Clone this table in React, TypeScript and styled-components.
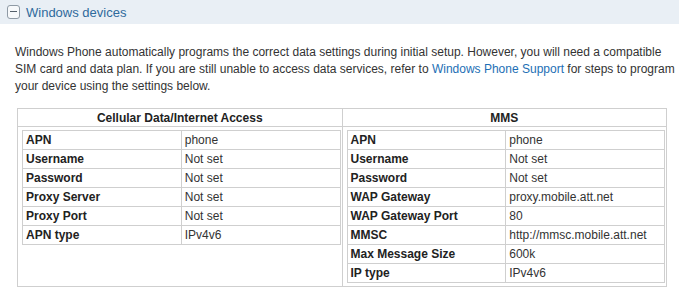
import React from 'react';
import styled, { createGlobalStyle } from 'styled-components';

const GlobalStyle = createGlobalStyle`
  body {
    margin: 0;
    background: #ffffff;
    font-family: "Liberation Sans", Arial, sans-serif;
    color: #333333;
  }
`;

const SectionHeader = styled.div`
  display: flex;
  align-items: center;
  gap: 6px;
  height: 24px;
  padding-left: 7px;
  background: #e9eff5;
`;

const ToggleIcon = styled.span`
  position: relative;
  box-sizing: border-box;
  width: 13px;
  height: 14px;
  border: 1px solid #8f9aa5;
  border-radius: 3px;
  background: #f7f9fb;

  &::after {
    content: '';
    position: absolute;
    left: 2px;
    right: 2px;
    top: 5px;
    height: 1px;
    background: #55606b;
  }
`;

const Title = styled.span`
  font-size: 13px;
  color: #2f6a9c;
`;

const Body = styled.div`
  padding: 20px 0 0 15px;
`;

const Intro = styled.p`
  margin: 0;
  width: 664px;
  font-size: 12px;
  line-height: 17px;
  color: #333333;
`;

const Link = styled.a`
  color: #1d6fb5;
  text-decoration: none;
`;

const OuterTable = styled.table`
  margin: 13px 0 0 2px;
  width: 650px;
  border-collapse: collapse;
  font-size: 12px;
  color: #222222;
`;

const HeadCell = styled.th`
  height: 17px;
  padding: 0;
  border: 1px solid #cfcfcf;
  font-weight: bold;
  text-align: center;
  width: 50%;
`;

const OuterCell = styled.td`
  padding: 3px 1px 3px 4px;
  border: 1px solid #cfcfcf;
  vertical-align: top;
`;

const InnerTable = styled.table`
  width: 100%;
  border-collapse: collapse;
`;

const InnerCell = styled.td<{ $label?: boolean }>`
  height: 18px;
  padding: 0 3px;
  border: 1px solid #cfcfcf;
  width: 50%;
  font-weight: ${(p) => (p.$label ? 'bold' : 'normal')};
  color: ${(p) => (p.$label ? '#222222' : '#333333')};
  white-space: nowrap;
`;

type Row = [string, string];

const cellular: Row[] = [
  ['APN', 'phone'],
  ['Username', 'Not set'],
  ['Password', 'Not set'],
  ['Proxy Server', 'Not set'],
  ['Proxy Port', 'Not set'],
  ['APN type', 'IPv4v6'],
];

const mms: Row[] = [
  ['APN', 'phone'],
  ['Username', 'Not set'],
  ['Password', 'Not set'],
  ['WAP Gateway', 'proxy.mobile.att.net'],
  ['WAP Gateway Port', '80'],
  ['MMSC', 'http://mmsc.mobile.att.net'],
  ['Max Message Size', '600k'],
  ['IP type', 'IPv4v6'],
];

const SettingsList: React.FC<{ rows: Row[] }> = ({ rows }) => (
  <InnerTable>
    <tbody>
      {rows.map(([label, value]) => (
        <tr key={label}>
          <InnerCell $label>{label}</InnerCell>
          <InnerCell>{value}</InnerCell>
        </tr>
      ))}
    </tbody>
  </InnerTable>
);

const App: React.FC = () => {
  return (
    <>
      <GlobalStyle />
      <SectionHeader>
        <ToggleIcon />
        <Title>Windows devices</Title>
      </SectionHeader>
      <Body>
        <Intro>
          Windows Phone automatically programs the correct data settings during initial setup. However, you will need a
          compatible SIM card and data plan. If you are still unable to access data services, refer to{' '}
          <Link href="#">Windows Phone Support</Link> for steps to program your device using the settings below.
        </Intro>
        <OuterTable>
          <thead>
            <tr>
              <HeadCell>Cellular Data/Internet Access</HeadCell>
              <HeadCell>MMS</HeadCell>
            </tr>
          </thead>
          <tbody>
            <tr>
              <OuterCell>
                <SettingsList rows={cellular} />
              </OuterCell>
              <OuterCell>
                <SettingsList rows={mms} />
              </OuterCell>
            </tr>
          </tbody>
        </OuterTable>
      </Body>
    </>
  );
};

export default App;
